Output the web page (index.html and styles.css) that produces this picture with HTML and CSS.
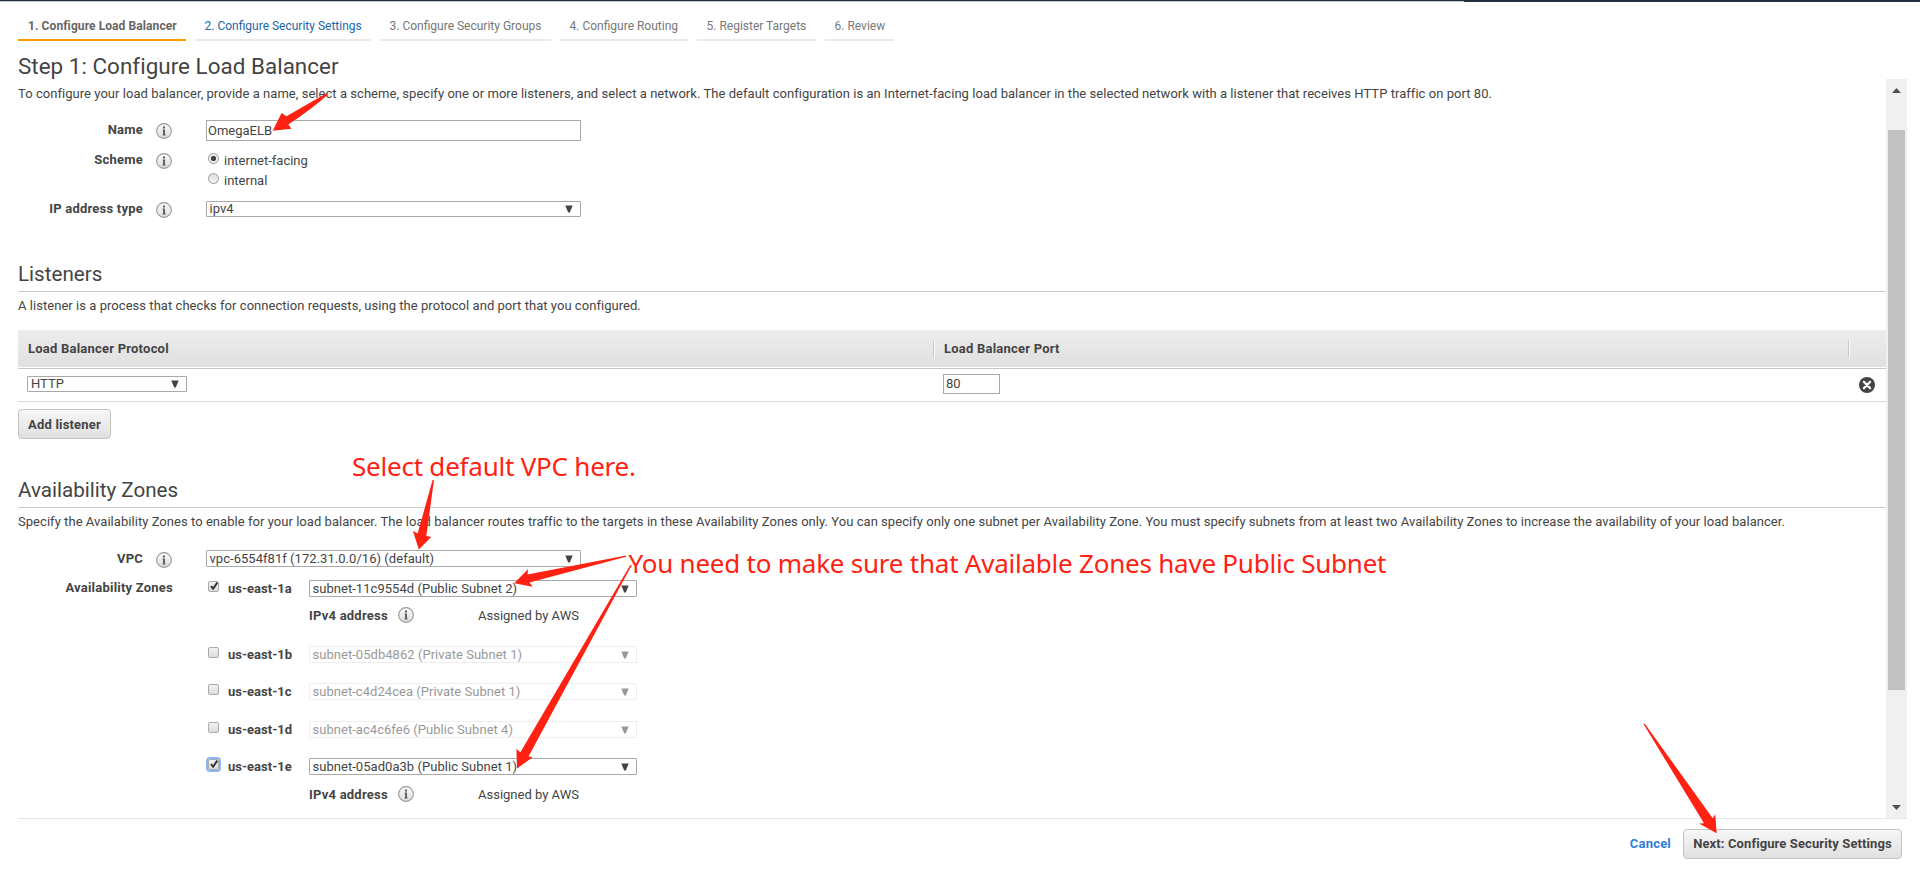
FILE: index.html
```html
<!DOCTYPE html>
<html lang="en">
<head>
<meta charset="utf-8">
<title>Configure Load Balancer</title>
<link rel="stylesheet" href="styles.css">
</head>
<body>
<svg class="defs" width="0" height="0">
  <defs>
    <linearGradient id="disc" x1="0" y1="0" x2="0" y2="1"><stop offset="0" stop-color="#fafafa"/><stop offset="1" stop-color="#dcdcdc"/></linearGradient>
    <symbol id="info" viewBox="0 0 16 16"><circle cx="8" cy="8" r="7.4" fill="url(#disc)" stroke="#999" stroke-width="1.1"/><path d="M7 3.600h2v2H7zM6.600 6.500H9v5h.6v1H6.500v-1H7.100V7.500h-.5z" fill="#5a5a5a"/></symbol>
    <symbol id="arrow" viewBox="0 0 8 8"><path d="M.3.5h7.4L4.8 7.6H3.2z" fill="currentColor"/></symbol>
  </defs>
</svg>
<div class="topbar"><div class="topbar-edge"></div></div>
<div class="page">
  <nav class="tabs">
    <span class="tab t1 active">1. Configure Load Balancer</span>
    <span class="tab t2 link">2. Configure Security Settings</span>
    <span class="tab t3">3. Configure Security Groups</span>
    <span class="tab t4">4. Configure Routing</span>
    <span class="tab t5">5. Register Targets</span>
    <span class="tab t6">6. Review</span>
  </nav>
  <h1>Step 1: Configure Load Balancer</h1>
  <div class="scroller">
    <main class="content">
      <p class="intro">To configure your load balancer, provide a name, select a scheme, specify one or more listeners, and select a network. The default configuration is an Internet-facing load balancer in the selected network with a listener that receives HTTP traffic on port 80.</p>
      <div class="row name-row"><b class="label">Name</b><svg class="info"><use href="#info"/></svg><div class="input name">OmegaELB</div></div>
      <div class="row scheme-row"><b class="label">Scheme</b><svg class="info"><use href="#info"/></svg>
        <div class="radios">
          <div class="option"><i class="radio on"></i>internet-facing</div>
          <div class="option"><i class="radio"></i>internal</div>
        </div>
      </div>
      <div class="row ip-row"><b class="label">IP address type</b><svg class="info"><use href="#info"/></svg><div class="select wide">ipv4<svg><use href="#arrow"/></svg></div></div>

      <h2 class="h-list">Listeners</h2>
      <p class="sub">A listener is a process that checks for connection requests, using the protocol and port that you configured.</p>
      <div class="thead"><b class="c1">Load Balancer Protocol</b><b class="c2">Load Balancer Port</b><b class="c3"></b></div>
      <div class="trow">
        <div class="c1"><div class="select proto">HTTP<svg><use href="#arrow"/></svg></div></div>
        <div class="c2"><div class="input port">80</div></div>
        <div class="c3"><svg class="remove" viewBox="0 0 16 16"><circle cx="8" cy="8" r="8" fill="#444"/><path d="M4.9 4.9l6.2 6.2M11.1 4.9l-6.2 6.2" stroke="#fff" stroke-width="2.2" stroke-linecap="round"/></svg></div>
      </div>
      <button class="btn add">Add listener</button>

      <h2 class="h-zones">Availability Zones</h2>
      <p class="sub zones-sub">Specify the Availability Zones to enable for your load balancer. The load balancer routes traffic to the targets in these Availability Zones only. You can specify only one subnet per Availability Zone. You must specify subnets from at least two Availability Zones to increase the availability of your load balancer.</p>
      <div class="row vpc-row"><b class="label">VPC</b><svg class="info"><use href="#info"/></svg><div class="select wide tall">vpc-6554f81f (172.31.0.0/16) (default)<svg><use href="#arrow"/></svg></div></div>
      <div class="zones">
        <b class="zones-label">Availability Zones</b>
        <div class="zone-list">
          <div class="zone"><i class="check"><svg viewBox="0 0 10 10"><path d="M2 5.2l2.1 2.5L8.3 1.6" /></svg></i><b>us-east-1a</b><div class="select tall">subnet-11c9554d (Public Subnet 2)<svg><use href="#arrow"/></svg></div></div>
          <div class="address first"><b>IPv4 address</b><svg class="info"><use href="#info"/></svg><span>Assigned by AWS</span></div>
          <div class="zone off zb"><i class="check"></i><b>us-east-1b</b><div class="select tall">subnet-05db4862 (Private Subnet 1)<svg><use href="#arrow"/></svg></div></div>
          <div class="zone off zc"><i class="check"></i><b>us-east-1c</b><div class="select tall">subnet-c4d24cea (Private Subnet 1)<svg><use href="#arrow"/></svg></div></div>
          <div class="zone off zd"><i class="check"></i><b>us-east-1d</b><div class="select tall">subnet-ac4c6fe6 (Public Subnet 4)<svg><use href="#arrow"/></svg></div></div>
          <div class="zone ze"><i class="check focus"><svg viewBox="0 0 10 10"><path d="M2 5.2l2.1 2.5L8.3 1.6" /></svg></i><b>us-east-1e</b><div class="select tall">subnet-05ad0a3b (Public Subnet 1)<svg><use href="#arrow"/></svg></div></div>
          <div class="address last"><b>IPv4 address</b><svg class="info"><use href="#info"/></svg><span>Assigned by AWS</span></div>
        </div>
      </div>
    </main>
    <div class="scrollbar">
      <svg class="sb-up" viewBox="0 0 9 5"><path d="M0 5L4.5 0 9 5z" fill="#505050"/></svg>
      <div class="thumb"></div>
      <svg class="sb-down" viewBox="0 0 9 5"><path d="M0 0h9L4.5 5z" fill="#505050"/></svg>
    </div>
  </div>
  <footer><b class="cancel">Cancel</b><button class="btn next">Next: Configure Security Settings</button></footer>
</div>
<svg class="notes" viewBox="0 0 1920 878">
  <g fill="#ff2112">
    <path d="M326 93.500L286.500 116.300 281.600 113 272.700 130.700 291.500 128.700 288.300 124.500Q312 109 328.500 94z"/>
    <path d="M432.600 480h1.400L426.300 536l4.900.9-12.400 12.600-5.900-18.700 4.700 2.700z"/>
    <path d="M626 555.500v1.300L529.500 582.500l3.200 4.200-18.500-3.400 14-14.300-.8 5.500z"/>
    <path d="M630.300 565h1.500L528.500 756.500l4.200.8-15.700 11.200-.6-19.400 4 3.200z"/>
    <path d="M1643.500 724l1.300-.3 67.900 94.600 2.500-4 1.500 18.900-17.700-9.700 5-.2z"/>
    <text x="352" y="475.500" textLength="284">Select default VPC here.</text>
    <text x="628.500" y="572.700" textLength="758">You need to make sure that Available Zones have Public Subnet</text>
  </g>
</svg>
</body>
</html>
```
FILE: styles.css
```css
* { box-sizing: border-box; }
body { margin: 0; background: #fff; color: #444; font: 13px/20px Roboto, "Liberation Sans", sans-serif; width: 1920px; height: 878px; overflow: hidden; position: relative; }
h1, h2, p { margin: 0; font-weight: 400; white-space: nowrap; }
p { letter-spacing: 0.044px; }
b { font-weight: 700; }
.defs { position: absolute; }
.topbar { height: 2px; background: #232f3e; padding-top: 1px; }
.topbar-edge { height: 1px; width: 1464px; background: #c3c5d3; }
.page { padding-left: 18px; display: flex; flex-direction: column; }

.tabs { display: flex; gap: 9px; margin-top: 14px; height: 25px; font-size: 12px; color: #777; }
.tab { border-bottom: 2px solid #eaeaea; padding-left: 9.5px; line-height: 20px; white-space: nowrap; }
.tab.active { color: #666; font-weight: 700; border-color: #f90; padding-left: 10px; letter-spacing: 0.09px; }
.tab.link { color: #2466a8; }
.t1 { width: 168px; }
.t2 { width: 176px; }
.t3 { width: 171px; }
.t4 { width: 128px; }
.t5 { width: 119px; }
.t6 { width: 69px; }
h1 { font-size: 22.4px; line-height: 26px; height: 38px; padding-top: 12px; letter-spacing: 0.04px; }

.scroller { display: flex; width: 1889px; height: 740px; border-bottom: 1px solid #e6e6e6; }
.content { width: 1868px; height: 739px; overflow: hidden; }
.intro { padding-top: 5px; height: 41px; }
.row { display: flex; align-items: center; }
.label, .zones-label, .thead b, .address b { letter-spacing: 0.22px; }
.label { width: 125px; text-align: right; margin-right: 13px; white-space: nowrap; }
.info { width: 16px; height: 16px; flex: none; }
.row .info { margin-right: 34px; margin-top: 2px; }
.input, .select { border: 1px solid #a9a9a9; background: #fff; display: flex; align-items: center; white-space: nowrap; }
.select { border-radius: 1px; justify-content: space-between; padding: 0 7px 0 2.5px; height: 16px; line-height: 14px; }
.select svg { width: 8px; height: 8px; }
.tall { height: 17px; letter-spacing: 0.04px; }
.name-row { height: 21px; }
.name-row .label { padding-bottom: 2px; }
.name-row .info { margin-top: 1px; }
.name { width: 375px; height: 21px; padding-left: 1px; }
.scheme-row { height: 40px; margin-top: 10px; align-items: flex-start; }
.scheme-row .label { margin-top: -1px; }
.option { display: flex; height: 20px; line-height: 20px; padding-left: 2px; }
.radio { width: 11px; height: 11px; border: 1px solid #999; border-radius: 50%; background: linear-gradient(#ddd, #f6f6f6); margin: 2px 5px 0 0; flex: none; }
.radio.on { background: radial-gradient(circle, #444 2.2px, #eee 3px); }
.ip-row { height: 16px; margin-top: 10px; }
.wide { width: 375px; }

h2 { font-size: 20.6px; line-height: 26px; border-bottom: 1px solid #ccc; }
.h-list { margin-top: 44px; height: 31px; }
.sub { margin-top: 4px; height: 34px; }
.thead, .trow { display: flex; }
.thead { height: 39px; background: linear-gradient(#ededed, #dfdfdf); border-bottom: 1px solid #c5c5c5; box-shadow: inset 0 -1px #fff; align-items: center; }
.c1 { width: 915px; padding-left: 9px; }
.c2 { width: 915px; padding-left: 10px; }
.c3 { flex: 1; }
.thead .c1 { padding-left: 10px; }
.thead b { height: 17px; line-height: 18px; margin-top: -2px; }
.thead .c2, .thead .c3 { border-left: 1px solid #c8c8c8; box-shadow: inset 1px 0 #f8f8f8; }
.trow { height: 33px; align-items: center; border-bottom: 1px solid #ddd; }
.proto { width: 160px; margin-top: -2px; padding-left: 3px; }
.port { width: 57px; height: 20px; padding-left: 2px; margin-top: -2px; line-height: 18px; }
.remove { display: block; width: 16px; height: 16px; margin-left: 11px; }
.btn { font: 700 13px/20px Roboto, "Liberation Sans", sans-serif; color: #444; border: 1px solid #c3c3c3; border-radius: 4px; background: linear-gradient(#f7f7f7, #e0e0e0); padding: 0; height: 30px; display: block; white-space: nowrap; }
.add { width: 93px; margin-top: 7px; padding-top: 1px; letter-spacing: 0.18px; }
.h-zones { margin-top: 38px; height: 31px; }
.zones-sub { height: 38px; }
.vpc-row { height: 17px; }
.zones { display: flex; margin-top: 13px; }
.zones-label { width: 155px; text-align: right; line-height: 16px; margin-right: 35px; }
.zone { display: flex; height: 17px; }
.zone > b { width: 81px; line-height: 18px; }
.zone .select { width: 328px; }
.check { width: 11px; height: 11px; margin: 1px 9px 0 0; border: 1px solid #aaa; border-radius: 2px; background: linear-gradient(#f2f2f2, #dcdcdc); flex: none; }
.check svg { display: block; width: 10px; height: 10px; margin-top: -1px; fill: none; stroke: #333; stroke-width: 2; }
.check.focus { outline: 2px solid #8db4f5; }
.off .select { color: #999; border-color: #eee; }
.address { display: flex; align-items: center; height: 20px; margin: 9px 0 0 101px; }
.address.first { margin-bottom: 20px; }
.address.last { margin-top: 10px; }
.address b { width: 89px; }
.address .info { margin: -2px 64px 0 0; }
.zb { margin-bottom: 20px; }
.zc { margin-bottom: 21px; }
.zd { margin-bottom: 20px; }

.scrollbar { width: 21px; background: #f0f0f0; display: flex; flex-direction: column; align-items: center; }
.sb-up { width: 9px; height: 5px; margin: 9px 0 37px; }
.sb-down { width: 9px; height: 5px; margin-top: 115px; }
.thumb { width: 17px; height: 560px; background: #c1c1c1; }
footer { display: flex; width: 1884px; justify-content: flex-end; margin-top: 10px; }
.cancel { color: #2f7ddb; line-height: 30px; margin-right: 12px; letter-spacing: 0.2px; }
.next { width: 219px; letter-spacing: 0.11px; }
.notes { position: absolute; left: 0; top: 0; width: 1920px; height: 878px; pointer-events: none; font: 26px "Noto Sans", "Open Sans", sans-serif; }
```
